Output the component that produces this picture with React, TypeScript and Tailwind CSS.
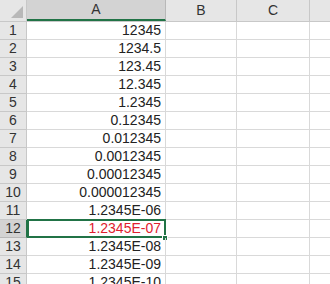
import React from 'react';

const values = [
  '12345',
  '1234.5',
  '123.45',
  '12.345',
  '1.2345',
  '0.12345',
  '0.012345',
  '0.0012345',
  '0.00012345',
  '0.000012345',
  '1.2345E-06',
  '1.2345E-07',
  '1.2345E-08',
  '1.2345E-09',
  '1.2345E-10',
];

const SELECTED = 12;

const App: React.FC = () => {
  return (
    <div
      className="w-[330px] h-[284px] overflow-hidden bg-white text-[14px] text-[#222]"
      style={{ fontFamily: '"Liberation Sans", Arial, sans-serif' }}
    >
      {/* column headers */}
      <div className="flex h-[22px] bg-[#e6e6e6] border-b border-[#c8c8c8]">
        <div className="relative w-[27px] shrink-0 border-r border-[#c8c8c8]">
          <svg className="absolute right-[3px] bottom-[3px]" width="12" height="12" viewBox="0 0 12 12">
            <polygon points="12,0 12,12 0,12" fill="#b8b8b8" />
          </svg>
        </div>
        <div className="w-[139px] shrink-0 flex items-center justify-center bg-[#d3d3d3] border-r border-[#b8b8b8] border-b-2 border-b-[#217346] text-[#333]">
          A
        </div>
        <div className="w-[71px] shrink-0 flex items-center justify-center border-r border-[#c8c8c8] text-[#333]">
          B
        </div>
        <div className="w-[73px] shrink-0 flex items-center justify-center border-r border-[#c8c8c8] text-[#333]">
          C
        </div>
        <div className="flex-1" />
      </div>

      {values.map((v, i) => {
        const row = i + 1;
        const sel = row === SELECTED;
        return (
          <div key={row} className="flex h-[18px]">
            <div
              className={`w-[27px] shrink-0 flex items-center justify-center border-b border-r ${
                sel ? 'bg-[#d3d3d3] border-r-[#217346] border-b-[#b8b8b8]' : 'bg-[#e6e6e6] border-[#c8c8c8]'
              } text-[#333]`}
            >
              {row}
            </div>
            <div
              className={`relative w-[139px] shrink-0 flex items-center justify-end pr-[4px] border-b border-r border-[#d9d9d9] ${
                sel ? 'text-[#e0202e]' : ''
              }`}
            >
              {v}
              {sel && (
                <>
                  <div className="absolute left-0 -top-px -right-[1px] -bottom-[1px] border-2 border-[#217346] pointer-events-none" />
                  <div className="absolute -right-[3px] -bottom-[4px] w-[6px] h-[6px] bg-[#217346] border border-white" />
                </>
              )}
            </div>
            <div className="w-[71px] shrink-0 border-b border-r border-[#d9d9d9]" />
            <div className="w-[73px] shrink-0 border-b border-r border-[#d9d9d9]" />
            <div className="flex-1 border-b border-[#d9d9d9]" />
          </div>
        );
      })}
    </div>
  );
};

export default App;
